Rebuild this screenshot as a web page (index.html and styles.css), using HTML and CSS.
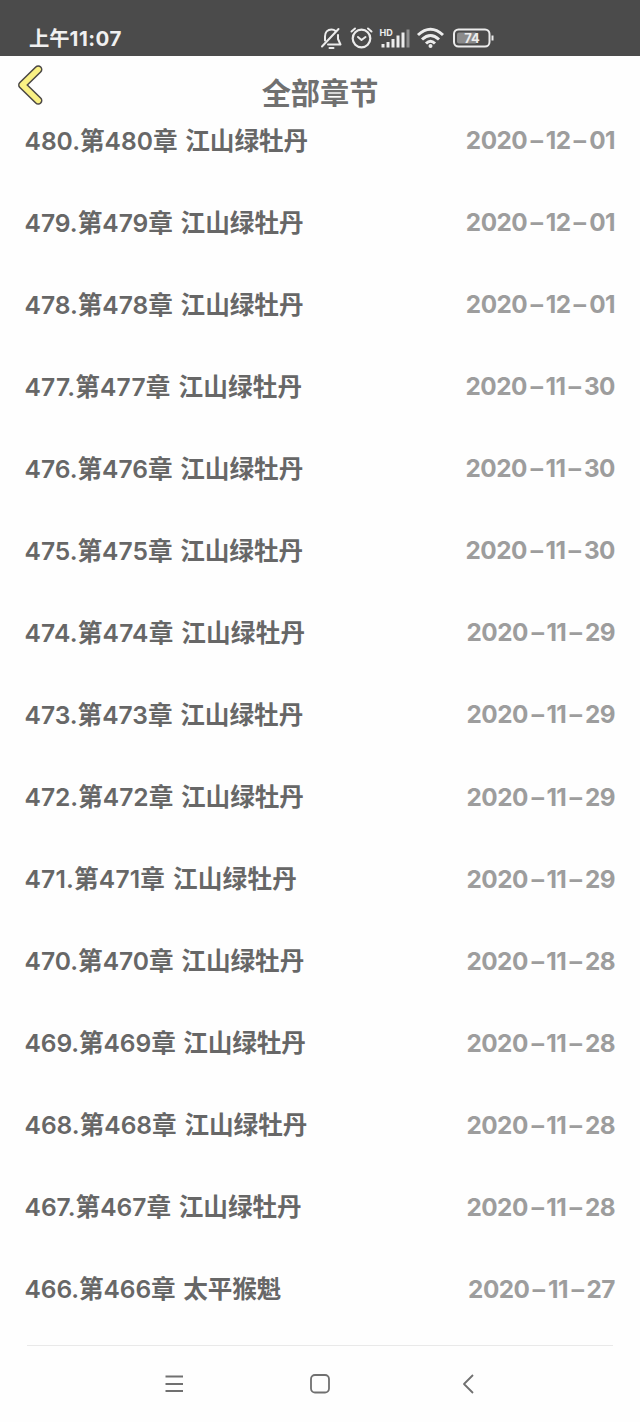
FILE: index.html
```
<!DOCTYPE html>
<html lang="zh-CN">
<head>
<meta charset="utf-8">
<title>全部章节</title>
<link rel="stylesheet" href="styles.css">
</head>
<body>
<div class="statusbar">
  <span class="clock">上午<b>11:07</b></span>
  <svg class="status-icons" width="180" height="28" viewBox="318 24 180 28">
    <g fill="none" stroke="#ececec" stroke-width="2" stroke-linecap="round" stroke-linejoin="round">
      <path d="M322 46.500 338.500 29"/>
      <path d="M325 40.500v-4c0-4 2.500-7 6.500-7 1.500 0 3 .5 4 1.500M338 35v4l2.500 5.500h-12.500M329.500 48h4"/>
      <circle cx="361.500" cy="38.500" r="8.800" stroke-width="2.200"/>
      <path d="M351.500 31.500 355 28.500M368 28.500 371.500 31.500M358 37l3.500 3 4-3"/>
    </g>
    <text class="hd" x="379.500" y="35.500">HD</text>
    <g stroke="#ececec" stroke-width="3">
      <path d="M383 44v3.500M388 42v5.500M393 39v8.500M398 35.500v12M403 32.500v15"/>
      <path d="M408 29.500v18" stroke="#8e8e8e"/>
    </g>
    <g fill="none" stroke="#ececec" stroke-width="3">
      <path d="M418 35Q430.500 23.500 443 35"/>
      <path d="M422 39.500Q430.500 31.500 439 39.500"/>
      <path d="M426 43.500Q430.500 39 435 43.500"/>
    </g>
    <circle cx="430.500" cy="46" r="2" fill="#ececec"/>
    <rect x="457" y="32.500" width="20" height="11" rx="2" fill="#8b8b8b"/>
    <rect x="454" y="29.500" width="35.500" height="17" rx="4.500" fill="none" stroke="#ececec" stroke-width="2"/>
    <path d="M492.500 35.500v5" stroke="#ececec" stroke-width="2"/>
    <text class="level" x="472" y="43" text-anchor="middle">74</text>
  </svg>
</div>
<header class="header">
  <svg class="back" width="30" height="44" viewBox="0 0 30 44">
    <path d="M22.200 6.500 6.300 22 22.200 37.500" fill="none" stroke="#4c4845" stroke-width="8.500" stroke-linecap="round" stroke-linejoin="round"/>
    <path d="M22.200 6.500 6.300 22 22.200 37.500" fill="none" stroke="#faf184" stroke-width="5.400" stroke-linecap="round" stroke-linejoin="round"/>
  </svg>
  <h1>全部章节</h1>
</header>
<main class="chapters">
  <div class="row"><span class="name">480.第480章 江山绿牡丹</span><time>2020<i>-</i>12<i>-</i>01</time></div>
  <div class="row"><span class="name">479.第479章 江山绿牡丹</span><time>2020<i>-</i>12<i>-</i>01</time></div>
  <div class="row"><span class="name">478.第478章 江山绿牡丹</span><time>2020<i>-</i>12<i>-</i>01</time></div>
  <div class="row"><span class="name loose">477.第477章 江山绿牡丹</span><time>2020<i>-</i>11<i>-</i>30</time></div>
  <div class="row"><span class="name">476.第476章 江山绿牡丹</span><time>2020<i>-</i>11<i>-</i>30</time></div>
  <div class="row"><span class="name">475.第475章 江山绿牡丹</span><time>2020<i>-</i>11<i>-</i>30</time></div>
  <div class="row"><span class="name loose">474.第474章 江山绿牡丹</span><time>2020<i>-</i>11<i>-</i>29</time></div>
  <div class="row"><span class="name">473.第473章 江山绿牡丹</span><time>2020<i>-</i>11<i>-</i>29</time></div>
  <div class="row"><span class="name">472.第472章 江山绿牡丹</span><time>2020<i>-</i>11<i>-</i>29</time></div>
  <div class="row"><span class="name loose">471.第471章 江山绿牡丹</span><time>2020<i>-</i>11<i>-</i>29</time></div>
  <div class="row"><span class="name">470.第470章 江山绿牡丹</span><time>2020<i>-</i>11<i>-</i>28</time></div>
  <div class="row"><span class="name tight">469.第469章 江山绿牡丹</span><time>2020<i>-</i>11<i>-</i>28</time></div>
  <div class="row"><span class="name">468.第468章 江山绿牡丹</span><time>2020<i>-</i>11<i>-</i>28</time></div>
  <div class="row"><span class="name">467.第467章 江山绿牡丹</span><time>2020<i>-</i>11<i>-</i>28</time></div>
  <div class="row"><span class="name tight">466.第466章 太平猴魁</span><time>2020<i>-</i>11<i>-</i>27</time></div>
</main>
<nav class="navbar">
  <svg width="24" height="24" viewBox="0 0 24 24"><path d="M3.500 4.500h17.500M3.500 12h17.500M3.500 19h17.500"/></svg>
  <svg width="24" height="24" viewBox="0 0 24 24"><rect x="3" y="3" width="18" height="17.500" rx="4"/></svg>
  <svg width="24" height="24" viewBox="0 0 24 24"><path d="M19 3 10 12 19 21"/></svg>
</nav>
</body>
</html>
```
FILE: styles.css
```
* { box-sizing: border-box; }
body {
  margin: 0;
  width: 640px;
  height: 1422px;
  overflow: hidden;
  display: flex;
  flex-direction: column;
  background: #fefefe;
  font-family: "Inter", "Noto Sans CJK SC", sans-serif;
}
.statusbar {
  height: 56px;
  flex: none;
  display: flex;
  align-items: flex-start;
  justify-content: space-between;
  padding: 24px 142px 0 29px;
  background: #4b4b4b;
  color: #f0f0f0;
}
.clock { font-size: 20.300px; font-weight: 700; line-height: 28px; padding-top: 1px; }
.clock b { font-size: 20.500px; font-weight: 700; letter-spacing: 0.500px; }
.status-icons { display: block; }
.hd { font-size: 9px; font-weight: 700; fill: #ececec; }
.level { font-size: 13px; font-weight: 700; fill: #ececec; }
.header {
  height: 43px;
  flex: none;
  display: grid;
  grid-template-columns: 48px 1fr 48px;
  padding: 7px 16px 0;
}
.back { display: block; }
h1 {
  margin: 10px 0 0;
  text-align: center;
  font-size: 29.200px;
  line-height: 42px;
  font-weight: 700;
  color: #707070;
}
.chapters {
  flex: none;
  height: 1247px;
  margin: 0 27px;
  border-bottom: 1px solid #e9e9e9;
}
.row {
  height: 82.070px;
  margin: 0 -2px 0 -2.500px;
  display: flex;
  justify-content: space-between;
  align-items: center;
  font-size: 24.600px;
  white-space: nowrap;
}
.name {
  font-weight: 600;
  color: #676767;
  padding-bottom: 3px;
  word-spacing: 1.500px;
}
.loose { letter-spacing: 0.190px; }
.tight { letter-spacing: -0.100px; }
time { font-size: 24.300px; font-weight: 650; letter-spacing: -0.500px; color: #9d9d9d; }
time i {
  font-style: normal;
  font-weight: 700;
  display: inline-block;
  transform: scaleX(1.550);
  margin: 0 3.800px 0 3.900px;
}
.navbar {
  flex: 1;
  display: flex;
  justify-content: center;
  gap: 122px;
  padding-top: 26px;
}
.navbar svg { fill: none; stroke: #707070; stroke-width: 1.800; stroke-linejoin: round; }
```
